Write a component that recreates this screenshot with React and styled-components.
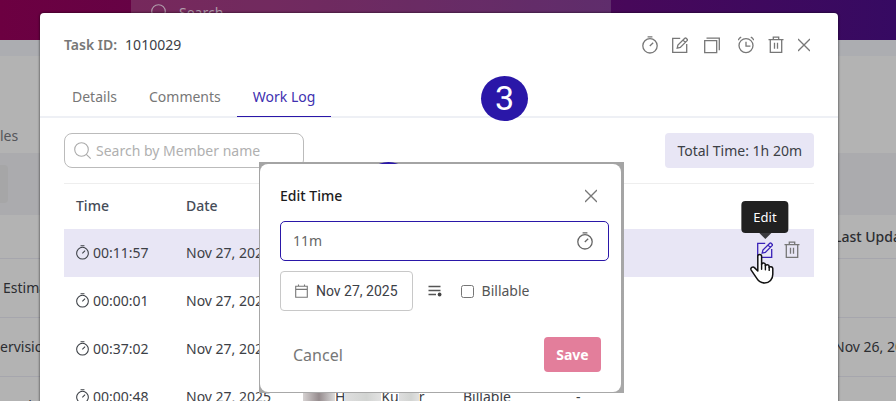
import React from 'react';
import styled, { createGlobalStyle, css } from 'styled-components';

const GlobalStyle = createGlobalStyle`
	* {
		box-sizing: border-box;
	}
	body {
		margin: 0;
		overflow: hidden;
		font-family: 'Noto Sans', sans-serif;
		font-size: 14px;
		line-height: 20px;
		color: #3c4046;
	}
	button,
	input {
		font: inherit;
		color: inherit;
	}
`;

/* page behind the modal */

const Page = styled.div`
	position: relative;
	height: 100vh;
	overflow: hidden;
	background: #b3b3b3;
`;

const TopBar = styled.header`
	display: flex;
	height: 40px;
	padding-left: 131px;
	background: linear-gradient(90deg, #6c0041 0%, #5e0549 35%, #47085a 70%, #360a62 100%);
`;

const TopSearch = styled.div`
	display: flex;
	flex: 0 1 480px;
	align-items: center;
	gap: 10px;
	height: 26px;
	padding: 0 20px;
	background: rgba(179, 179, 179, 0.22);
	color: #b09cab;
`;

const PageTabs = styled.div`
	height: 113px;
	padding-top: 70px;
	border-top: 16px solid #acadb1;
	color: #55565a;
`;

const PageBand = styled.div`
	height: 62px;
	padding-top: 12px;
	background: #ababae;
`;

const BandButton = styled.div`
	width: 8px;
	height: 38px;
	border-radius: 0 4px 4px 0;
	background: #a6a6a7;
`;

const PageRow = styled.div`
	display: flex;
	align-items: center;
	justify-content: space-between;
	height: ${(props) => (props.$head ? '44px' : '59px')};
	border-bottom: 1px solid #a6a6ad;
	color: #2b2d31;
	font-weight: ${(props) => (props.$head ? 500 : 400)};
	white-space: nowrap;
`;

const PageCell = styled.span`
	width: ${(props) => (props.$last ? '62px' : '40px')};
	padding-left: ${(props) => (props.$indent ? '3px' : '0')};
`;

/* task modal */

const Overlay = styled.div`
	position: absolute;
	inset: 0;
	display: flex;
	padding: 13px 58px 0 40px;
`;

const Modal = styled.section`
	position: relative;
	flex: 1;
	min-width: 0;
	border-radius: 4px 4px 0 0;
	background: #fff;
	box-shadow: 0 0 2px 1px rgba(0, 0, 0, 0.35);
`;

const ModalHeader = styled.div`
	display: flex;
	align-items: center;
	justify-content: space-between;
	height: 64px;
	padding: 0 28px 0 24px;
`;

const TaskId = styled.div`
	display: flex;
	gap: 8px;
	strong {
		font-weight: 600;
		color: #777;
	}
`;

const Actions = styled.div`
	display: flex;
	align-items: center;
	gap: ${(props) => (props.$wide ? '16px' : '14px')};
`;

const IconButton = styled.button`
	position: relative;
	display: flex;
	padding: 0;
	border: 0;
	background: none;
	color: ${(props) => (props.$active ? '#3a22b8' : '#777')};
	cursor: pointer;
`;

const Tabs = styled.nav`
	display: flex;
	height: 41px;
	padding-left: 16px;
	border-bottom: 2px solid #eef0f5;
`;

const Tab = styled.a`
	height: 40px;
	padding: 10px 16px 0;
	color: #777;
	text-decoration: none;
	${(props) =>
		props.$active &&
		css`
			color: #4030b0;
			border-bottom: 1px solid #2a17a8;
		`}
`;

const Content = styled.div`
	padding: 15px 24px 0;
`;

const Toolbar = styled.div`
	display: flex;
	justify-content: space-between;
	margin-bottom: 15px;
`;

const SearchField = styled.label`
	display: flex;
	align-items: center;
	gap: 4px;
	width: 240px;
	height: 35px;
	padding: 0 9px;
	border: 1px solid #bbb;
	border-radius: 8px;
	color: #aaa;
	input {
		flex: 1;
		min-width: 0;
		padding: 0;
		border: 0;
		outline: 0;
		background: none;
	}
	input::placeholder {
		color: #b0b0b0;
	}
`;

const Total = styled.div`
	padding: 8px 12px 7px;
	border-radius: 4px;
	background: #e8e6f5;
`;

const Table = styled.table`
	width: 100%;
	table-layout: fixed;
	border-collapse: collapse;
	border-top: 1px solid #eee;
	th,
	td {
		height: 48px;
		padding: 0 0 0 12px;
		text-align: left;
		white-space: nowrap;
	}
	th {
		height: 45px;
		font-weight: 500;
		color: #454c58;
	}
`;

const Col = styled.col`
	width: ${(props) => props.$width};
`;

const Row = styled.tr`
	background: ${(props) => (props.$active ? '#e8e6f5' : 'transparent')};
`;

const Time = styled.span`
	display: flex;
	align-items: center;
	gap: 4px;
`;

const Member = styled.span`
	display: flex;
	align-items: center;
	height: 20px;
`;

const Redacted = styled.span`
	width: ${(props) => props.$width};
	height: 24px;
	background: ${(props) =>
		props.$avatar
			? 'linear-gradient(90deg, #d6d2d2, #968c8e 50%, #dcdcdc)'
			: 'linear-gradient(90deg, #dedede, #d2d4d2 60%, #e2e2e2)'};
`;

const RowActions = styled.div`
	display: flex;
	justify-content: flex-end;
	gap: 11px;
	padding-right: 14px;
	padding-bottom: 6px;
`;

const Tooltip = styled.span`
	position: absolute;
	bottom: 100%;
	left: 50%;
	margin-bottom: 8px;
	padding: 6px 12px;
	border-radius: 4px;
	background: #212121;
	color: #fff;
	font-size: 13px;
	transform: translateX(-50%);
	&::after {
		content: '';
		position: absolute;
		top: 100%;
		left: 50%;
		margin-left: -6px;
		border: 6px solid transparent;
		border-top-color: #3a3a3e;
		border-bottom: 0;
	}
`;

const Pointer = styled.svg`
	position: absolute;
	top: 12px;
	left: -8px;
`;

const Step = styled.span`
	position: absolute;
	top: ${(props) => props.$top};
	left: ${(props) => props.$left};
	display: flex;
	align-items: center;
	justify-content: center;
	width: 47px;
	height: 45px;
	border-radius: 50%;
	background: #2a17a8;
	color: #fff;
	font: 400 34px/45px Roboto, sans-serif;
`;

/* edit time dialog */

const DialogFrame = styled.div`
	position: absolute;
	top: 149px;
	left: 219px;
	width: 365px;
	padding: 2px 3px 1px 1px;
	background: linear-gradient(#a4a4a4, #a8a8a8);
`;

const Dialog = styled.form`
	position: relative;
	padding: 20px 12px 20px 20px;
	border-radius: 8px;
	background: #fff;
`;

const DialogTitle = styled.div`
	display: flex;
	align-items: center;
	justify-content: space-between;
	padding: 2px 12px 0 0;
	margin-bottom: 15px;
	h2 {
		margin: 0;
		font-size: 14px;
		font-weight: 500;
		color: #1c1c1c;
	}
`;

const TimeField = styled.label`
	display: flex;
	align-items: center;
	height: 40px;
	padding: 0 15px 0 12px;
	margin-bottom: 10px;
	border: 1px solid #2a17a8;
	border-radius: 5px;
	color: #666;
	input {
		flex: 1;
		min-width: 0;
		padding: 0;
		border: 0;
		outline: 0;
	}
`;

const Options = styled.div`
	display: flex;
	align-items: center;
	margin-bottom: 26px;
`;

const DateButton = styled.button`
	display: flex;
	align-items: center;
	gap: 8px;
	height: 40px;
	padding: 0 14px;
	margin-right: 15px;
	border: 1px solid #c8c8c8;
	border-radius: 4px;
	background: #fff;
	font-family: Roboto, sans-serif;
	white-space: nowrap;
	svg {
		color: #777;
	}
`;

const Billable = styled.label`
	display: flex;
	align-items: center;
	gap: 8px;
	margin-left: 19px;
	color: #555;
	input {
		width: 13px;
		height: 13px;
		margin: 0;
	}
`;

const DialogFooter = styled.div`
	display: flex;
	align-items: center;
	justify-content: space-between;
	padding: 0 8px 0 13px;
`;

const CancelButton = styled.button`
	padding: 0;
	border: 0;
	background: none;
	font-size: 16px;
	color: #777;
`;

const SaveButton = styled.button`
	min-width: 57px;
	height: 35px;
	padding: 0 12px;
	border: 0;
	border-radius: 4px;
	background: #e37e9b;
	color: #fff;
	font-weight: 700;
`;

const Svg = ({ w = 16, h = 18, vw = w, vh = h, stroke = 1.3, children }) => (
	<svg
		width={w}
		height={h}
		viewBox={`0 0 ${vw} ${vh}`}
		fill="none"
		stroke="currentColor"
		strokeWidth={stroke}
		aria-hidden="true"
	>
		{children}
	</svg>
);

const StopwatchIcon = ({ w, h }) => (
	<Svg w={w} h={h} vw={16} vh={18}>
		<circle cx="8" cy="9.8" r="7.2" />
		<path d="M5.6.8h4.8M7.8 10l3.4-3.2" />
	</Svg>
);

const EditIcon = () => (
	<Svg>
		<path d="M8.2 2.4H.7v14h14V8" />
		<path d="M5.2 12.1l.7-3.1 6.9-6.7a1 1 0 0 1 1.4 0l.9.9a1 1 0 0 1 0 1.4l-6.8 6.8-3.1.7zM11 4.1l2.3 2.3" />
	</Svg>
);

const CopyIcon = () => (
	<Svg w={20}>
		<path d="M2.7 4.7h12v12h-12z" />
		<path d="M4.5 2.1h12.8v12.2" />
	</Svg>
);

const AlarmIcon = () => (
	<Svg>
		<circle cx="8" cy="9.6" r="7" />
		<path d="M8 5.8v4.3h4.4M.2 4.2c.6-1.5 1.6-2.4 3-3M15.8 4.2c-.6-1.5-1.6-2.4-3-3" />
	</Svg>
);

const TrashIcon = () => (
	<Svg>
		<path d="M.5 3.6h15M2.3 3.6v12.8h11.4V3.6M5.3 3.4V1.2h5.4v2.2M6.5 6.7v6M9.5 6.7v6" />
	</Svg>
);

const CloseIcon = () => (
	<Svg w={12}>
		<path d="M0 3l12 12M12 3L0 15" />
	</Svg>
);

const SearchIcon = () => (
	<Svg w={18} h={18} stroke={1.1}>
		<circle cx="7.5" cy="7.5" r="6.8" />
		<path d="M12.3 12.3l4.4 4.4" />
	</Svg>
);

const CalendarIcon = () => (
	<Svg w={13} h={14} stroke={1.1}>
		<path d="M.7 2.3h11.6v10.9H.7zM.7 5.4h11.6M3.5.6v1.7M9.5.6v1.7" />
	</Svg>
);

const NotesIcon = () => (
	<Svg w={14} h={12} stroke={1.6}>
		<path d="M.5 1.5h12M.5 5.5h12M.5 9.5h7.5" stroke="#555" />
		<circle cx="11.6" cy="9.5" r="1.9" fill="#444" stroke="none" />
	</Svg>
);

const HandPointer = () => (
	<Pointer width="26" height="32" viewBox="0 0 26 32" aria-hidden="true">
		<path
			d="M8.8 3.3c0-2.5 3.8-2.5 3.8 0v8.2c.2-2 3.7-1.9 3.8.3v1c.3-1.7 3.7-1.5 3.8.6v1.2c.4-1.5 3.6-1.2 3.6 1v5.7c0 5.2-3.3 8.7-8.2 8.7-4 0-6.1-1.8-7.8-4.6l-5.6-8.3c-1.3-2.3 1.7-4 3.5-2.2L8.8 18z"
			fill="#fff"
			stroke="#111"
			strokeWidth="1.5"
			strokeLinejoin="round"
		/>
		<path d="M12.6 11v5.2M16.4 12.3v4.4M20.2 13.8v3.6" stroke="#111" strokeWidth="1.4" strokeLinecap="round" />
	</Pointer>
);

const logs = [
	{ time: '00:11:57', date: 'Nov 27, 2025', active: true },
	{ time: '00:00:01', date: 'Nov 27, 2025' },
	{ time: '00:37:02', date: 'Nov 27, 2025' },
	{ time: '00:00:48', date: 'Nov 27, 2025', member: ['H', 'Ku', 'r'], type: 'Billable', note: '-' },
];

const EditTime = () => (
	<DialogFrame>
		<Step $top="0" $left="106px" />
		<Dialog onSubmit={(e) => e.preventDefault()}>
			<DialogTitle>
				<h2>Edit Time</h2>
				<IconButton type="button" aria-label="Close">
					<CloseIcon />
				</IconButton>
			</DialogTitle>
			<TimeField>
				<input aria-label="Time" defaultValue="11m" />
				<StopwatchIcon />
			</TimeField>
			<Options>
				<DateButton type="button">
					<CalendarIcon />
					Nov 27, 2025
				</DateButton>
				<IconButton type="button" aria-label="Notes">
					<NotesIcon />
				</IconButton>
				<Billable>
					<input type="checkbox" />
					Billable
				</Billable>
			</Options>
			<DialogFooter>
				<CancelButton type="button">Cancel</CancelButton>
				<SaveButton type="submit">Save</SaveButton>
			</DialogFooter>
		</Dialog>
	</DialogFrame>
);

const WorkLog = () => (
	<Table>
		<colgroup>
			<Col $width="110px" />
			<Col $width="117px" />
			<Col $width="160px" />
			<Col $width="113px" />
			<Col $width="auto" />
			<Col $width="90px" />
		</colgroup>
		<thead>
			<tr>
				<th>Time</th>
				<th>Date</th>
				<th aria-label="Member" />
				<th aria-label="Type" />
				<th aria-label="Note" />
				<th aria-label="Actions" />
			</tr>
		</thead>
		<tbody>
			{logs.map((log) => (
				<Row key={log.time} $active={log.active}>
					<td>
						<Time>
							<StopwatchIcon w={13} h={15} />
							{log.time}
						</Time>
					</td>
					<td>{log.date}</td>
					<td>
						{log.member && (
							<Member>
								<Redacted $width="32px" $avatar />
								{log.member[0]}
								<Redacted $width="36px" />
								{log.member[1]}
								<Redacted $width="20px" />
								{log.member[2]}
							</Member>
						)}
					</td>
					<td>{log.type}</td>
					<td>{log.note}</td>
					<td>
						{log.active && (
							<RowActions>
								<IconButton type="button" aria-label="Edit" $active>
									<EditIcon />
									<Tooltip role="tooltip">Edit</Tooltip>
									<HandPointer />
								</IconButton>
								<IconButton type="button" aria-label="Delete">
									<TrashIcon />
								</IconButton>
							</RowActions>
						)}
					</td>
				</Row>
			))}
		</tbody>
	</Table>
);

const App = () => {
	return (
		<Page>
			<GlobalStyle />
			<TopBar>
				<TopSearch>
					<SearchIcon />
					Search
				</TopSearch>
			</TopBar>
			<PageTabs>les</PageTabs>
			<PageBand>
				<BandButton />
			</PageBand>
			<PageRow $head>
				<PageCell />
				<PageCell $last>Last Updated</PageCell>
			</PageRow>
			<PageRow>
				<PageCell $indent>Estimate</PageCell>
			</PageRow>
			<PageRow>
				<PageCell>ervision</PageCell>
				<PageCell $last>Nov 26, 2025</PageCell>
			</PageRow>
			<PageRow>
				<PageCell>t Estimate</PageCell>
			</PageRow>

			<Overlay>
				<Modal>
					<ModalHeader>
						<TaskId>
							<strong>Task ID:</strong>
							<span>1010029</span>
						</TaskId>
						<Actions $wide>
							<Actions>
								<IconButton aria-label="Timer">
									<StopwatchIcon />
								</IconButton>
								<IconButton aria-label="Edit task">
									<EditIcon />
								</IconButton>
								<IconButton aria-label="Copy">
									<CopyIcon />
								</IconButton>
							</Actions>
							<Actions>
								<IconButton aria-label="Reminder">
									<AlarmIcon />
								</IconButton>
								<IconButton aria-label="Delete task">
									<TrashIcon />
								</IconButton>
								<IconButton aria-label="Close task">
									<CloseIcon />
								</IconButton>
							</Actions>
						</Actions>
					</ModalHeader>
					<Tabs>
						<Tab href="#details">Details</Tab>
						<Tab href="#comments">Comments</Tab>
						<Tab href="#worklog" $active>
							Work Log
						</Tab>
					</Tabs>
					<Step $top="63px" $left="441px">
						3
					</Step>
					<Content>
						<Toolbar>
							<SearchField>
								<SearchIcon />
								<input type="search" aria-label="Search by Member name" placeholder="Search by Member name" />
							</SearchField>
							<Total>Total Time: 1h 20m</Total>
						</Toolbar>
						<WorkLog />
					</Content>
					<EditTime />
				</Modal>
			</Overlay>
		</Page>
	);
};

export default App;
